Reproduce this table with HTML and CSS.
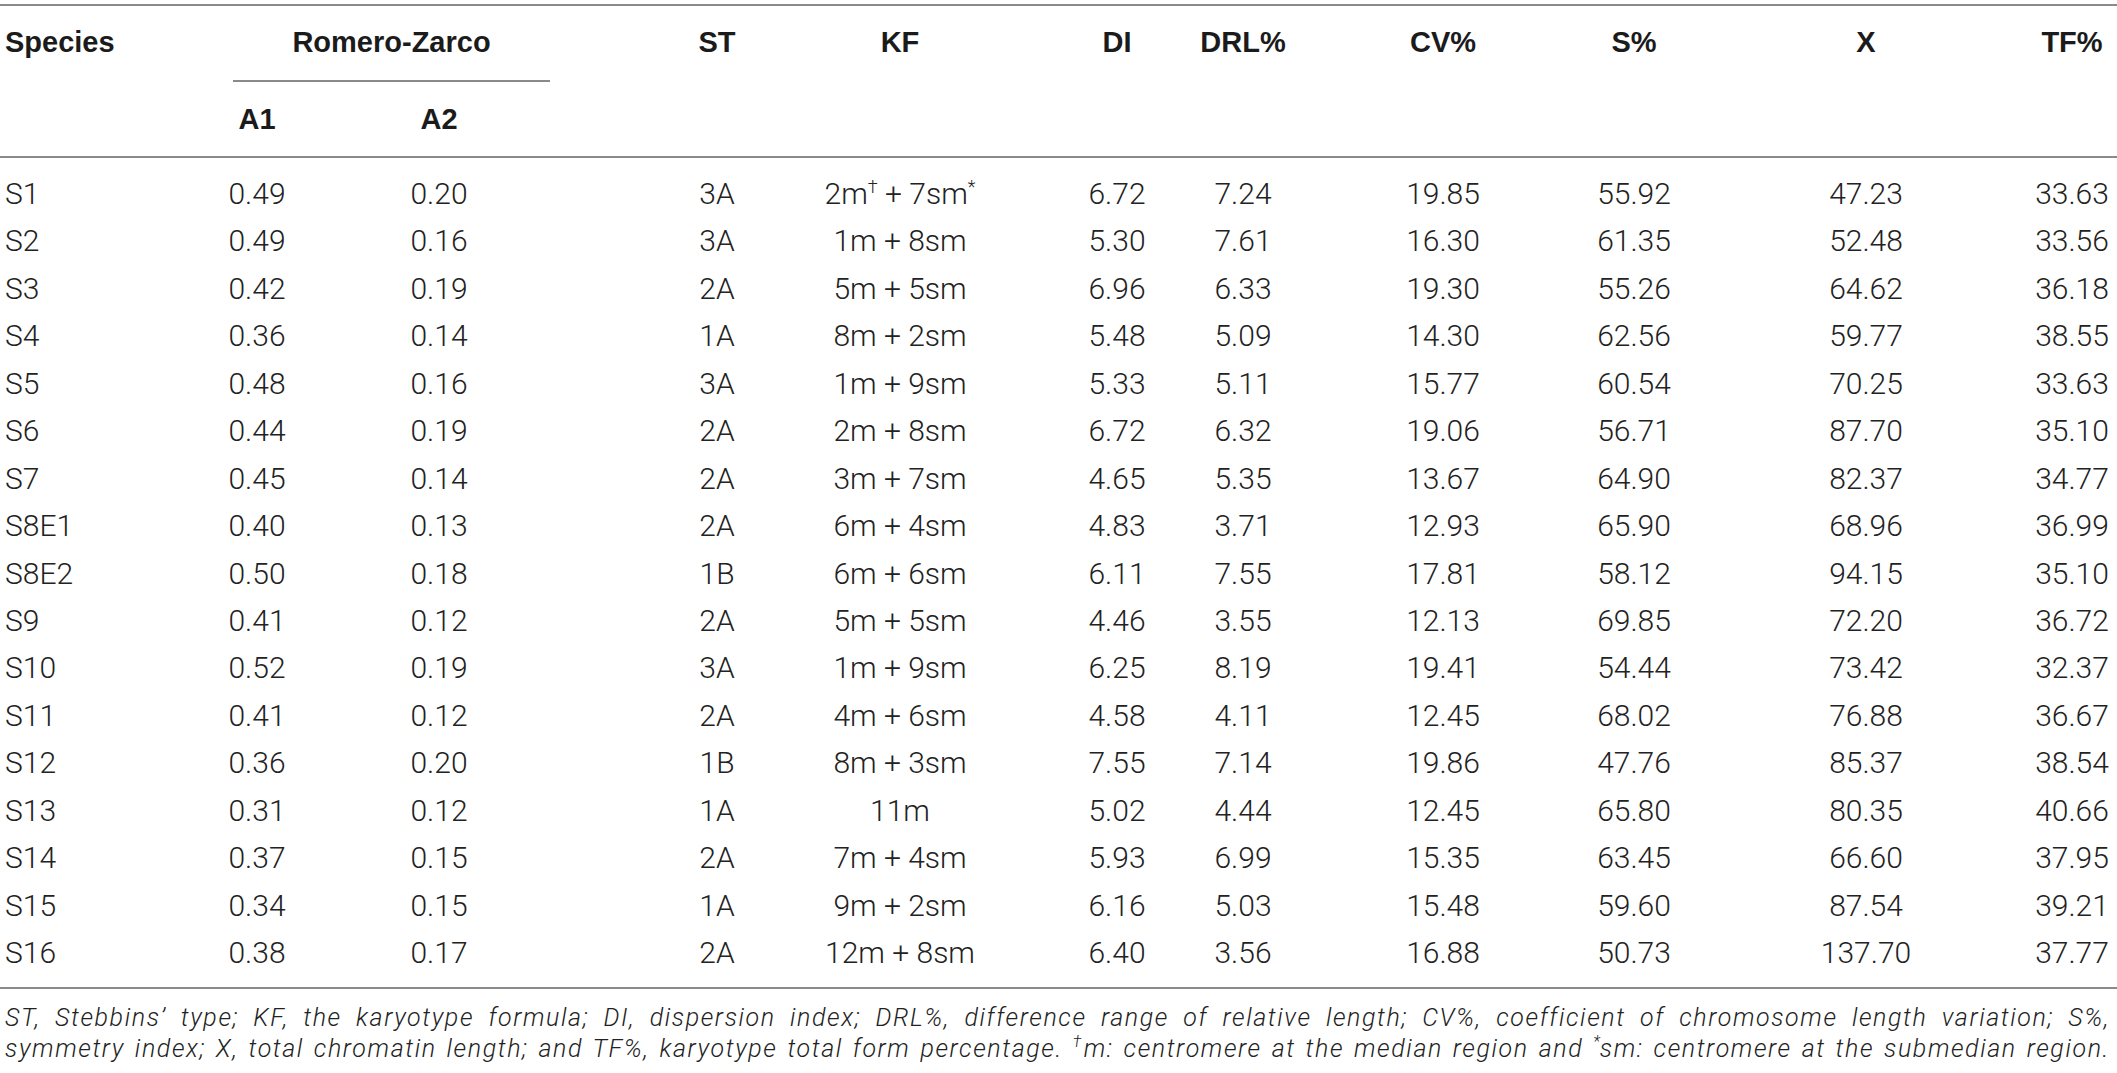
FILE: index.html
```html
<!DOCTYPE html>
<html>
<head lang="en">
    <meta charset="UTF-8">
    <title>Karyotype parameters</title>
    <link rel="stylesheet" href="styles.css">
</head>
<body>
<div id="page">
<table class="karyo">
    <colgroup>
        <col class="c-sp"><col class="c-a1"><col class="c-a2"><col class="c-st"><col class="c-kf"><col class="c-di">
        <col class="c-drl"><col class="c-cv"><col class="c-s"><col class="c-x"><col class="c-tf">
    </colgroup>
    <thead>
    <tr class="top">
        <th rowspan="2" class="sp">Species</th>
        <th colspan="2" class="group"><div class="under">Romero-Zarco</div></th>
        <th rowspan="2" class="st">ST</th>
        <th rowspan="2">KF</th>
        <th rowspan="2" class="di">DI</th>
        <th rowspan="2">DRL%</th>
        <th rowspan="2">CV%</th>
        <th rowspan="2">S%</th>
        <th rowspan="2" class="x">X</th>
        <th rowspan="2" class="tf">TF%</th>
    </tr>
    <tr class="sub">
        <th>A1</th>
        <th>A2</th>
    </tr>
    </thead>
    <tbody>
    <tr><td>S1</td><td>0.49</td><td>0.20</td><td>3A</td><td>2m<sup>&dagger;</sup> + 7sm<sup>*</sup></td><td>6.72</td><td>7.24</td><td>19.85</td><td>55.92</td><td>47.23</td><td>33.63</td></tr>
    <tr><td>S2</td><td>0.49</td><td>0.16</td><td>3A</td><td>1m + 8sm</td><td>5.30</td><td>7.61</td><td>16.30</td><td>61.35</td><td>52.48</td><td>33.56</td></tr>
    <tr><td>S3</td><td>0.42</td><td>0.19</td><td>2A</td><td>5m + 5sm</td><td>6.96</td><td>6.33</td><td>19.30</td><td>55.26</td><td>64.62</td><td>36.18</td></tr>
    <tr><td>S4</td><td>0.36</td><td>0.14</td><td>1A</td><td>8m + 2sm</td><td>5.48</td><td>5.09</td><td>14.30</td><td>62.56</td><td>59.77</td><td>38.55</td></tr>
    <tr><td>S5</td><td>0.48</td><td>0.16</td><td>3A</td><td>1m + 9sm</td><td>5.33</td><td>5.11</td><td>15.77</td><td>60.54</td><td>70.25</td><td>33.63</td></tr>
    <tr><td>S6</td><td>0.44</td><td>0.19</td><td>2A</td><td>2m + 8sm</td><td>6.72</td><td>6.32</td><td>19.06</td><td>56.71</td><td>87.70</td><td>35.10</td></tr>
    <tr><td>S7</td><td>0.45</td><td>0.14</td><td>2A</td><td>3m + 7sm</td><td>4.65</td><td>5.35</td><td>13.67</td><td>64.90</td><td>82.37</td><td>34.77</td></tr>
    <tr><td>S8E1</td><td>0.40</td><td>0.13</td><td>2A</td><td>6m + 4sm</td><td>4.83</td><td>3.71</td><td>12.93</td><td>65.90</td><td>68.96</td><td>36.99</td></tr>
    <tr><td>S8E2</td><td>0.50</td><td>0.18</td><td>1B</td><td>6m + 6sm</td><td>6.11</td><td>7.55</td><td>17.81</td><td>58.12</td><td>94.15</td><td>35.10</td></tr>
    <tr><td>S9</td><td>0.41</td><td>0.12</td><td>2A</td><td>5m + 5sm</td><td>4.46</td><td>3.55</td><td>12.13</td><td>69.85</td><td>72.20</td><td>36.72</td></tr>
    <tr><td>S10</td><td>0.52</td><td>0.19</td><td>3A</td><td>1m + 9sm</td><td>6.25</td><td>8.19</td><td>19.41</td><td>54.44</td><td>73.42</td><td>32.37</td></tr>
    <tr><td>S11</td><td>0.41</td><td>0.12</td><td>2A</td><td>4m + 6sm</td><td>4.58</td><td>4.11</td><td>12.45</td><td>68.02</td><td>76.88</td><td>36.67</td></tr>
    <tr><td>S12</td><td>0.36</td><td>0.20</td><td>1B</td><td>8m + 3sm</td><td>7.55</td><td>7.14</td><td>19.86</td><td>47.76</td><td>85.37</td><td>38.54</td></tr>
    <tr><td>S13</td><td>0.31</td><td>0.12</td><td>1A</td><td>11m</td><td>5.02</td><td>4.44</td><td>12.45</td><td>65.80</td><td>80.35</td><td>40.66</td></tr>
    <tr><td>S14</td><td>0.37</td><td>0.15</td><td>2A</td><td>7m + 4sm</td><td>5.93</td><td>6.99</td><td>15.35</td><td>63.45</td><td>66.60</td><td>37.95</td></tr>
    <tr><td>S15</td><td>0.34</td><td>0.15</td><td>1A</td><td>9m + 2sm</td><td>6.16</td><td>5.03</td><td>15.48</td><td>59.60</td><td>87.54</td><td>39.21</td></tr>
    <tr><td>S16</td><td>0.38</td><td>0.17</td><td>2A</td><td>12m + 8sm</td><td>6.40</td><td>3.56</td><td>16.88</td><td>50.73</td><td>137.70</td><td>37.77</td></tr>
    </tbody>
</table>
<p class="notes">ST, Stebbins’ type; KF, the karyotype formula; DI, dispersion index; DRL%, difference range of relative length; CV%, coefficient of chromosome length variation; S%,<br>symmetry index; X, total chromatin length; and TF%, karyotype total form percentage. <sup>&dagger;</sup>m: centromere at the median region and <sup>*</sup>sm: centromere at the submedian region.</p>
</div>
</body>
</html>
```

FILE: styles.css
```css
*{
    margin: 0px;
    padding: 0px;
}
body{
    background: #fff;
    color: #222;
    font-family: Roboto, "Liberation Sans", sans-serif;
}
#page{
    width: 2117px;
    padding-top: 4px;
}
.karyo{
    width: 2117px;
    table-layout: fixed;
    border-collapse: collapse;
    font-size: 30px;
    font-weight: 300;
}
.c-sp{ width: 180px; }
.c-a1{ width: 154px; }
.c-a2{ width: 210px; }
.c-st{ width: 276px; }
.c-kf{ width: 160px; }
.c-di{ width: 200px; }
.c-drl{ width: 126px; }
.c-cv{ width: 274px; }
.c-s{ width: 108px; }
.c-x{ width: 342px; }
.c-tf{ width: 87px; }

.karyo th{
    font-family: "Liberation Sans", Arial, sans-serif;
    font-weight: bold;
    font-size: 29px;
    color: #1b1b1b;
    text-align: center;
    vertical-align: top;
    line-height: 36px;
    padding-top: 18px;
    white-space: nowrap;
}
.karyo thead{
    border-top: 2px solid #8a8a8a;
}
.karyo tbody{
    border-top: 2px solid #8a8a8a;
    border-bottom: 2px solid #8a8a8a;
}
.karyo th.sp{
    text-align: left;
    padding-left: 5px;
}
.karyo th.group{
    vertical-align: bottom;
}
.under{
    margin: 0px -6px 0px 53px;
    padding-bottom: 20px;
    border-bottom: 2px solid #8a8a8a;
}
.karyo tr.sub th{
    vertical-align: middle;
    padding-top: 0px;
    height: 74px;
}
.karyo th.st,
.karyo tbody td:nth-child(4){
    padding-left: 70px;
}
.karyo th.di,
.karyo tbody td:nth-child(6){
    padding-left: 74px;
}
.karyo th.x,
.karyo tbody td:nth-child(10){
    padding-left: 14px;
}
.karyo th.tf,
.karyo tbody td:nth-child(11){
    padding-right: 3px;
}

.karyo td{
    text-align: center;
    line-height: 47.44px;
    white-space: nowrap;
}
.karyo td:first-child{
    text-align: left;
    padding-left: 5px;
}
.karyo tbody tr:first-child td{
    padding-top: 12px;
}
.karyo tbody tr:last-child td{
    padding-bottom: 11px;
}
.karyo sup{
    font-size: 18px;
    line-height: 0;
    vertical-align: 11px;
}

.notes{
    padding: 13px 7px 0px 5px;
    font-size: 25px;
    line-height: 31px;
    font-style: italic;
    font-weight: 300;
    letter-spacing: 1.6px;
    color: #222;
    white-space: nowrap;
    text-align: justify;
    text-align-last: justify;
}
.notes sup{
    font-size: 16px;
    line-height: 0;
    vertical-align: 10px;
    letter-spacing: 0px;
}
```
